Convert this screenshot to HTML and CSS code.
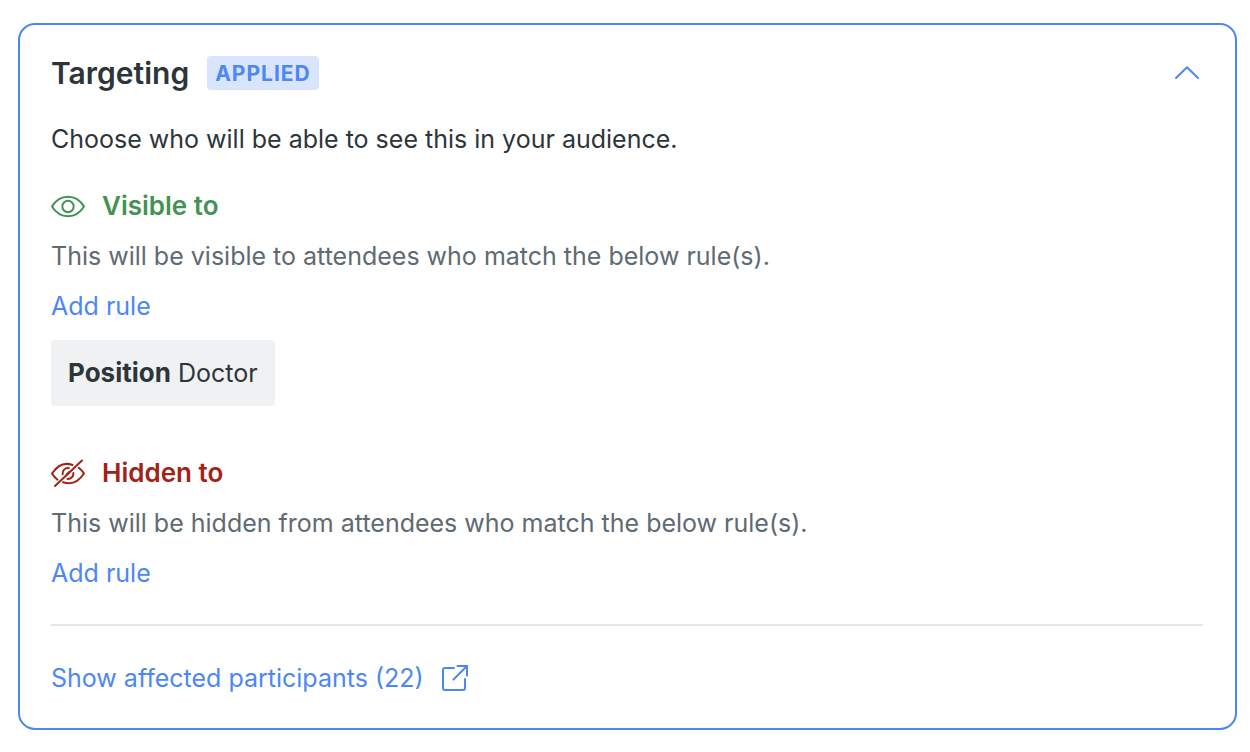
FILE: index.html
```html
<!DOCTYPE html>
<html lang="en">
<head>
    <meta charset="UTF-8">
    <meta name="viewport" content="width=device-width, initial-scale=1.0">
    <title>Targeting</title>
    <link rel="stylesheet" href="styles.css">
</head>
<body>
    <section class="card">
        <header class="card-header">
            <h2>Targeting</h2>
            <span class="badge">APPLIED</span>
            <button class="toggle" type="button" aria-label="Collapse" aria-expanded="true">
                <svg width="34" height="34" viewBox="0 0 34 34">
                    <path d="M7 22 L18 11.200 L29 22"/>
                </svg>
            </button>
        </header>

        <p class="intro">Choose who will be able to see this in your audience.</p>

        <div class="group visible">
            <h3>
                <svg width="34" height="34" viewBox="0 0 34 34">
                    <path d="M1 17.500 C9 4.500 25 4.500 33 17.500 C25 30.500 9 30.500 1 17.500 Z"/>
                    <circle cx="17" cy="17.500" r="5.700"/>
                </svg>
                Visible to
            </h3>
            <p>This will be visible to attendees who match the below rule(s).</p>
            <button class="link" type="button">Add rule</button>
            <div class="rule"><strong>Position</strong> Doctor</div>
        </div>

        <div class="group hidden-to">
            <h3>
                <svg width="34" height="34" viewBox="0 0 34 34">
                    <path d="M21.500 9 C14 6.200 6.500 9.300 1 17.500 C2.600 20.100 4.400 22.100 6.500 23.700"/>
                    <path d="M12 26.200 C20 28.800 27.500 26 33 17.500 C31.500 15.200 29.700 13.300 27.800 11.800"/>
                    <path d="M17.700 12.100 C14 11.700 11.200 14.500 11.600 18.300"/>
                    <path d="M16.500 22.900 C20 23.100 22.700 20.300 22.400 17"/>
                    <path d="M15.800 18.500 L18 16.300"/>
                    <path d="M4 30 L31 4.500"/>
                </svg>
                Hidden to
            </h3>
            <p>This will be hidden from attendees who match the below rule(s).</p>
            <button class="link" type="button">Add rule</button>
        </div>

        <footer class="card-footer">
            <a class="link" href="#">
                Show affected participants (22)
                <svg width="26" height="26" viewBox="0 0 26 26">
                    <path d="M12 3 H3 Q1 3 1 5 V23 Q1 25 3 25 H21 Q23 25 23 23 V14"/>
                    <path d="M11.500 14.500 L25 1"/>
                    <path d="M15.500 1 H25 V10.500"/>
                </svg>
            </a>
        </footer>
    </section>
</body>
</html>
```
FILE: styles.css
```css
* {
    box-sizing: border-box;
}
body {
    margin: 0;
    padding: 23px 13px 22px 18px;
    background: #fff;
    color: #2d353a;
    font-family: Inter, "Liberation Sans", sans-serif;
    font-size: 25px;
    line-height: 34px;
}
h2, h3, p {
    margin: 0;
}
svg {
    flex: none;
    fill: none;
    stroke: currentColor;
    stroke-width: 2;
    stroke-linecap: round;
    stroke-linejoin: round;
}
.card {
    padding: 31px 32px 33px 31px;
    border: 2px solid #4d87f6;
    border-radius: 17px;
}
.card-header {
    display: flex;
    align-items: center;
}
.card-header h2 {
    font-size: 30px;
    font-weight: 600;
    line-height: 34px;
}
.badge {
    margin-left: 18px;
    padding: 1px 8px 0;
    border-radius: 4px;
    background: #d9e5fd;
    color: #4d87f6;
    font-size: 21px;
    font-weight: 700;
    line-height: 33px;
    letter-spacing: 1px;
}
.toggle {
    display: flex;
    margin-left: auto;
    padding: 0;
    border: none;
    background: none;
    color: #4d87f6;
    cursor: pointer;
}
.intro {
    margin-top: 32px;
}
.group {
    display: flex;
    flex-direction: column;
    align-items: flex-start;
    gap: 16px;
    margin-top: 33px;
}
.group h3 {
    display: flex;
    align-items: center;
    gap: 17px;
    font-size: 26px;
    font-weight: 600;
}
.group p {
    color: #606a72;
}
.visible h3 {
    color: #439254;
}
.hidden-to {
    margin-top: 50px;
}
.hidden-to h3 {
    color: #a32218;
}
.link {
    padding: 0;
    border: none;
    background: none;
    color: #4d87f6;
    font: inherit;
    text-decoration: none;
    cursor: pointer;
}
.rule {
    margin-top: 1px;
    padding: 16px 17px;
    border-radius: 4px;
    background: #f0f1f3;
}
.rule strong {
    font-size: 26px;
    font-weight: 700;
}
.card-footer {
    margin-top: 34px;
    padding-top: 35px;
    border-top: 2px solid #e4e7e9;
}
.card-footer .link {
    display: inline-flex;
    align-items: center;
    gap: 18px;
    vertical-align: top;
}
```
